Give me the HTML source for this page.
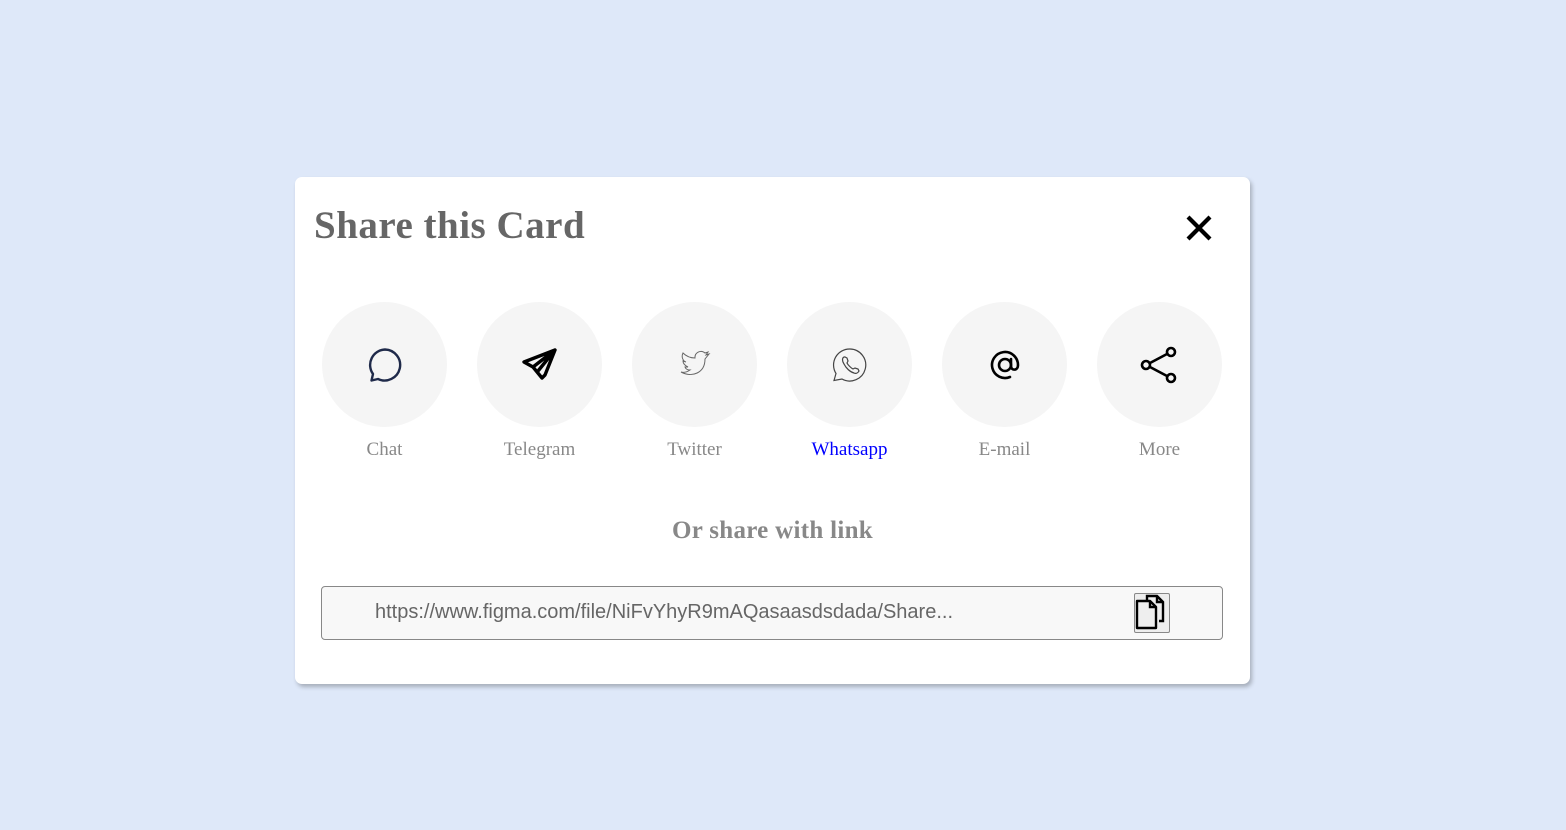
<!DOCTYPE html>
<html><head><style>
*{margin:0;padding:0;box-sizing:border-box}
body{width:1566px;height:830px;background:#dee8f9;position:relative;overflow:hidden;font-family:"Liberation Serif",serif}
.card{position:absolute;left:295px;top:177px;width:955px;height:507px;background:#fff;border-radius:7px;box-shadow:2px 3px 4px rgba(0,0,0,.25)}
h1{position:absolute;left:19px;top:27px;font-size:39px;letter-spacing:0.5px;font-weight:bold;color:#666;line-height:44px}
.x{position:absolute;left:890px;top:37px}
.it{position:absolute;top:125px;width:125px;text-align:center}
.c{width:125px;height:125px;border-radius:50%;background:#f5f5f5;display:flex;align-items:center;justify-content:center}
.l{margin-top:12px;font-size:19px;color:#888;line-height:22px}
.or{position:absolute;left:0;width:955px;top:340px;text-align:center;font-size:25px;letter-spacing:0.3px;font-weight:bold;color:#888}
.in{position:absolute;left:26px;top:409px;width:902px;height:54px;border:1px solid #888;border-radius:4px;background:#f8f8f8}
.in span{position:absolute;left:53px;top:14px;font-family:"Liberation Sans",sans-serif;font-size:20px;color:#666}
.cp{position:absolute;left:812px;top:6px;width:36px;height:40px;border:1px solid #888;border-radius:2px;background:#eee}
</style></head><body>
<div class="card">
<h1>Share this Card</h1>
<svg class="x" width="28" height="28" viewBox="0 0 28 28"><path d="M3 3L25 25M25 3L3 25" stroke="#000" stroke-width="4.2"/></svg>
<div class="it" style="left:27px"><div class="c"><svg width="36" height="36" viewBox="0 0 36 36"><path d="M18 2.5a15.5 15.5 0 1 1-7 29.5l-6.5 1.5 1.5-6.5A15.5 15.5 0 0 1 18 2.5z" fill="none" stroke="#1f2a4a" stroke-width="2.4" stroke-linejoin="round"/></svg></div><div class="l">Chat</div></div>
<div class="it" style="left:182px"><div class="c"><svg width="36" height="36" viewBox="0 0 36 36"><path d="M33 3L2 15l9 5 9 11 3-3L33 3zM11 20L33 3 16 24" fill="none" stroke="#000" stroke-width="3.4" stroke-linejoin="round"/></svg></div><div class="l">Telegram</div></div>
<div class="it" style="left:337px"><div class="c"><svg width="32" height="30" viewBox="0 0 32 30"><path d="M30 4l-3 1 2-3-3 1a6 6 0 0 0-10 5C11 8 7 6 4 3c-2 4 0 8 3 9l-3-1c0 3 3 5 5 6l-3 0c1 3 4 3 5 3-3 2-6 3-9 2 11 6 24 1 24-13z" fill="none" stroke="#666" stroke-width="1"/></svg></div><div class="l">Twitter</div></div>
<div class="it" style="left:492px"><div class="c"><svg width="36" height="36" viewBox="0 0 36 36"><path d="M18 2a16 16 0 1 1-8 30l-8 1.5 2-7A16 16 0 0 1 18 2z" fill="none" stroke="#444" stroke-width="1.2"/><path d="M12 10c-2 1-2 4 0 7 2 4 6 8 10 9 2 1 4 0 5-2l-1-2-3-1-2 1c-2-1-5-4-6-6l1-2-1-3-2-1z" fill="none" stroke="#444" stroke-width="1.2"/></svg></div><div class="l" style="color:#00f">Whatsapp</div></div>
<div class="it" style="left:647px"><div class="c"><svg width="34" height="34" viewBox="0 0 34 34"><circle cx="17" cy="17" r="6" fill="none" stroke="#000" stroke-width="2.6"/><path d="M23 11v7c0 5 7 5 7-1A13 13 0 1 0 22 29" fill="none" stroke="#000" stroke-width="2.6" stroke-linecap="round"/></svg></div><div class="l">E-mail</div></div>
<div class="it" style="left:802px"><div class="c"><svg width="40" height="40" viewBox="0 0 40 40"><circle cx="31" cy="7" r="4" fill="none" stroke="#000" stroke-width="2.6"/><circle cx="6" cy="20" r="4" fill="none" stroke="#000" stroke-width="2.6"/><circle cx="31" cy="33" r="4" fill="none" stroke="#000" stroke-width="2.6"/><path d="M10 18l17-9M10 22l17 9" stroke="#000" stroke-width="2.6"/></svg></div><div class="l">More</div></div>
<div class="or">Or share with link</div>
<div class="in"><span>https://www.figma.com/file/NiFvYhyR9mAQasaasdsdada/Share...</span>
<div class="cp"><svg width="36" height="40" viewBox="0 0 36 40" style="position:absolute;left:-1px;top:-1px"><path d="M13 8V3h10l6 6v19h-4" fill="none" stroke="#000" stroke-width="2.4"/><path d="M23 3v6h6" fill="none" stroke="#000" stroke-width="2.4"/><path d="M3 8h13l6 6v21H3z" fill="#eee" stroke="#000" stroke-width="2.4" stroke-linejoin="round"/><path d="M16 8v6h6" fill="none" stroke="#000" stroke-width="2.4"/></svg></div></div>
</div>
</body></html>
